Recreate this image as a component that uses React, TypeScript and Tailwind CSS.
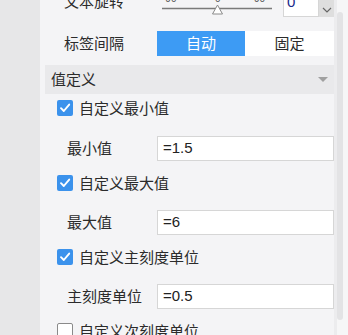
import React from "react";

const font = { fontFamily: '"Noto Sans CJK SC", "Noto Sans", sans-serif' };

function Check({ checked }: { checked: boolean }) {
  return checked ? (
    <div className="w-[16px] h-[16px] rounded-[2px] bg-[#3b92ec] flex items-center justify-center">
      <svg width="12" height="12" viewBox="0 0 12 12">
        <path d="M2 6.2 L4.8 9 L10.2 2.6" fill="none" stroke="#fff" strokeWidth="1.9" strokeLinecap="round" strokeLinejoin="round" />
      </svg>
    </div>
  ) : (
    <div className="w-[16px] h-[16px] rounded-[2px] bg-white border border-[#8a8a8a]" />
  );
}

function CheckRow({ label, checked, mt }: { label: string; checked: boolean; mt: string }) {
  return (
    <div className={`${mt} shrink-0 h-[28px] flex items-center pl-[17px] gap-[6px]`}>
      <Check checked={checked} />
      <span className="text-[15px] text-[#2b2b2b]">{label}</span>
    </div>
  );
}

function InputRow({ label, value, mt }: { label: string; value: string; mt: string }) {
  return (
    <div className={`${mt} shrink-0 h-[25px] flex items-center`}>
      <span className="w-[117px] pl-[27px] text-[15px] text-[#2b2b2b]">{label}</span>
      <div
        className="flex-1 h-[25px] bg-white border border-[#d6d6d6] flex items-center pl-[5px] text-[15px] text-[#222]"
        style={{ fontFamily: '"Liberation Sans", Arial, sans-serif' }}
      >
        {value}
      </div>
    </div>
  );
}

export default function App() {
  return (
    <div className="w-[348px] h-[335px] overflow-hidden flex bg-[#f4f4f6]" style={font}>
      <div className="w-[40px] h-full bg-[#e7e7e8]" />
      <div className="w-[294px] h-full bg-[#f4f4f6] flex flex-col">
        {/* row 1: 文本旋转 */}
        <div className="-mt-[8px] shrink-0 h-[25px] flex items-center">
          <span className="w-[117px] pl-[24px] mb-[7px] text-[15px] text-[#2b2b2b]">文本旋转</span>
          <svg width="118" height="25" viewBox="0 0 118 25" className="shrink-0">
            <text x="5" y="10" fontSize="10" fill="#555" fontFamily="Liberation Sans, Arial">-90</text>
            <text x="58" y="10" fontSize="10" fill="#555" fontFamily="Liberation Sans, Arial">0</text>
            <text x="97" y="10" fontSize="10" fill="#555" fontFamily="Liberation Sans, Arial">90</text>
            <line x1="5" y1="16.5" x2="115" y2="16.5" stroke="#7a7a7a" strokeWidth="1.5" />
            <polygon points="55.5,22 65.5,22 60.5,13" fill="#fff" stroke="#8a8a8a" strokeWidth="1" />
          </svg>
          <div className="ml-[8px] w-[36px] h-[25px] bg-white border border-[#d6d6d6] flex items-end pb-[3px] pl-[3px] text-[15px] text-[#1a2a8a]" style={{ fontFamily: '"Liberation Sans", Arial, sans-serif' }}>
            0
          </div>
          <div className="w-[15px] h-[25px] bg-[#dedede] flex items-end justify-center pb-[4px]">
            <svg width="10" height="6" viewBox="0 0 10 6">
              <path d="M1 1 L5 5 L9 1" fill="none" stroke="#666" strokeWidth="1.2" />
            </svg>
          </div>
        </div>
        {/* row 2: 标签间隔 */}
        <div className="mt-[14px] shrink-0 h-[25px] flex items-center">
          <span className="w-[117px] pl-[24px] text-[15px] text-[#2b2b2b]">标签间隔</span>
          <div className="flex-1 h-[25px] flex">
            <div className="w-[88px] h-full bg-[#3d9bf4] text-white text-[15px] flex items-center justify-center">自动</div>
            <div className="flex-1 h-full bg-white text-[#2b2b2b] text-[15px] flex items-center justify-center">固定</div>
          </div>
        </div>
        {/* header */}
        <div className="mt-[9px] shrink-0 ml-[5px] h-[29px] bg-[#e9e9eb] flex items-center justify-between pl-[6px] pr-[6px]">
          <span className="text-[15px] text-[#2b2b2b]">值定义</span>
          <svg width="10" height="6" viewBox="0 0 10 6">
            <polygon points="0,0 10,0 5,5" fill="#a0a0a0" />
          </svg>
        </div>
        <CheckRow label="自定义最小值" checked mt="mt-0" />
        <InputRow label="最小值" value="=1.5" mt="mt-[14px]" />
        <CheckRow label="自定义最大值" checked mt="mt-[8px]" />
        <InputRow label="最大值" value="=6" mt="mt-[13px]" />
        <CheckRow label="自定义主刻度单位" checked mt="mt-[8px]" />
        <InputRow label="主刻度单位" value="=0.5" mt="mt-[13px]" />
        <CheckRow label="自定义次刻度单位" checked={false} mt="mt-[8px]" />
      </div>
      <div className="w-[14px] h-full flex bg-[#f6f6f7]">
        <div className="w-[3px] h-full bg-[#ececee]" />
        <div className="w-[6px] mt-[12px] h-[308px] rounded-full bg-[#e3e3e5]" />
      </div>
    </div>
  );
}
